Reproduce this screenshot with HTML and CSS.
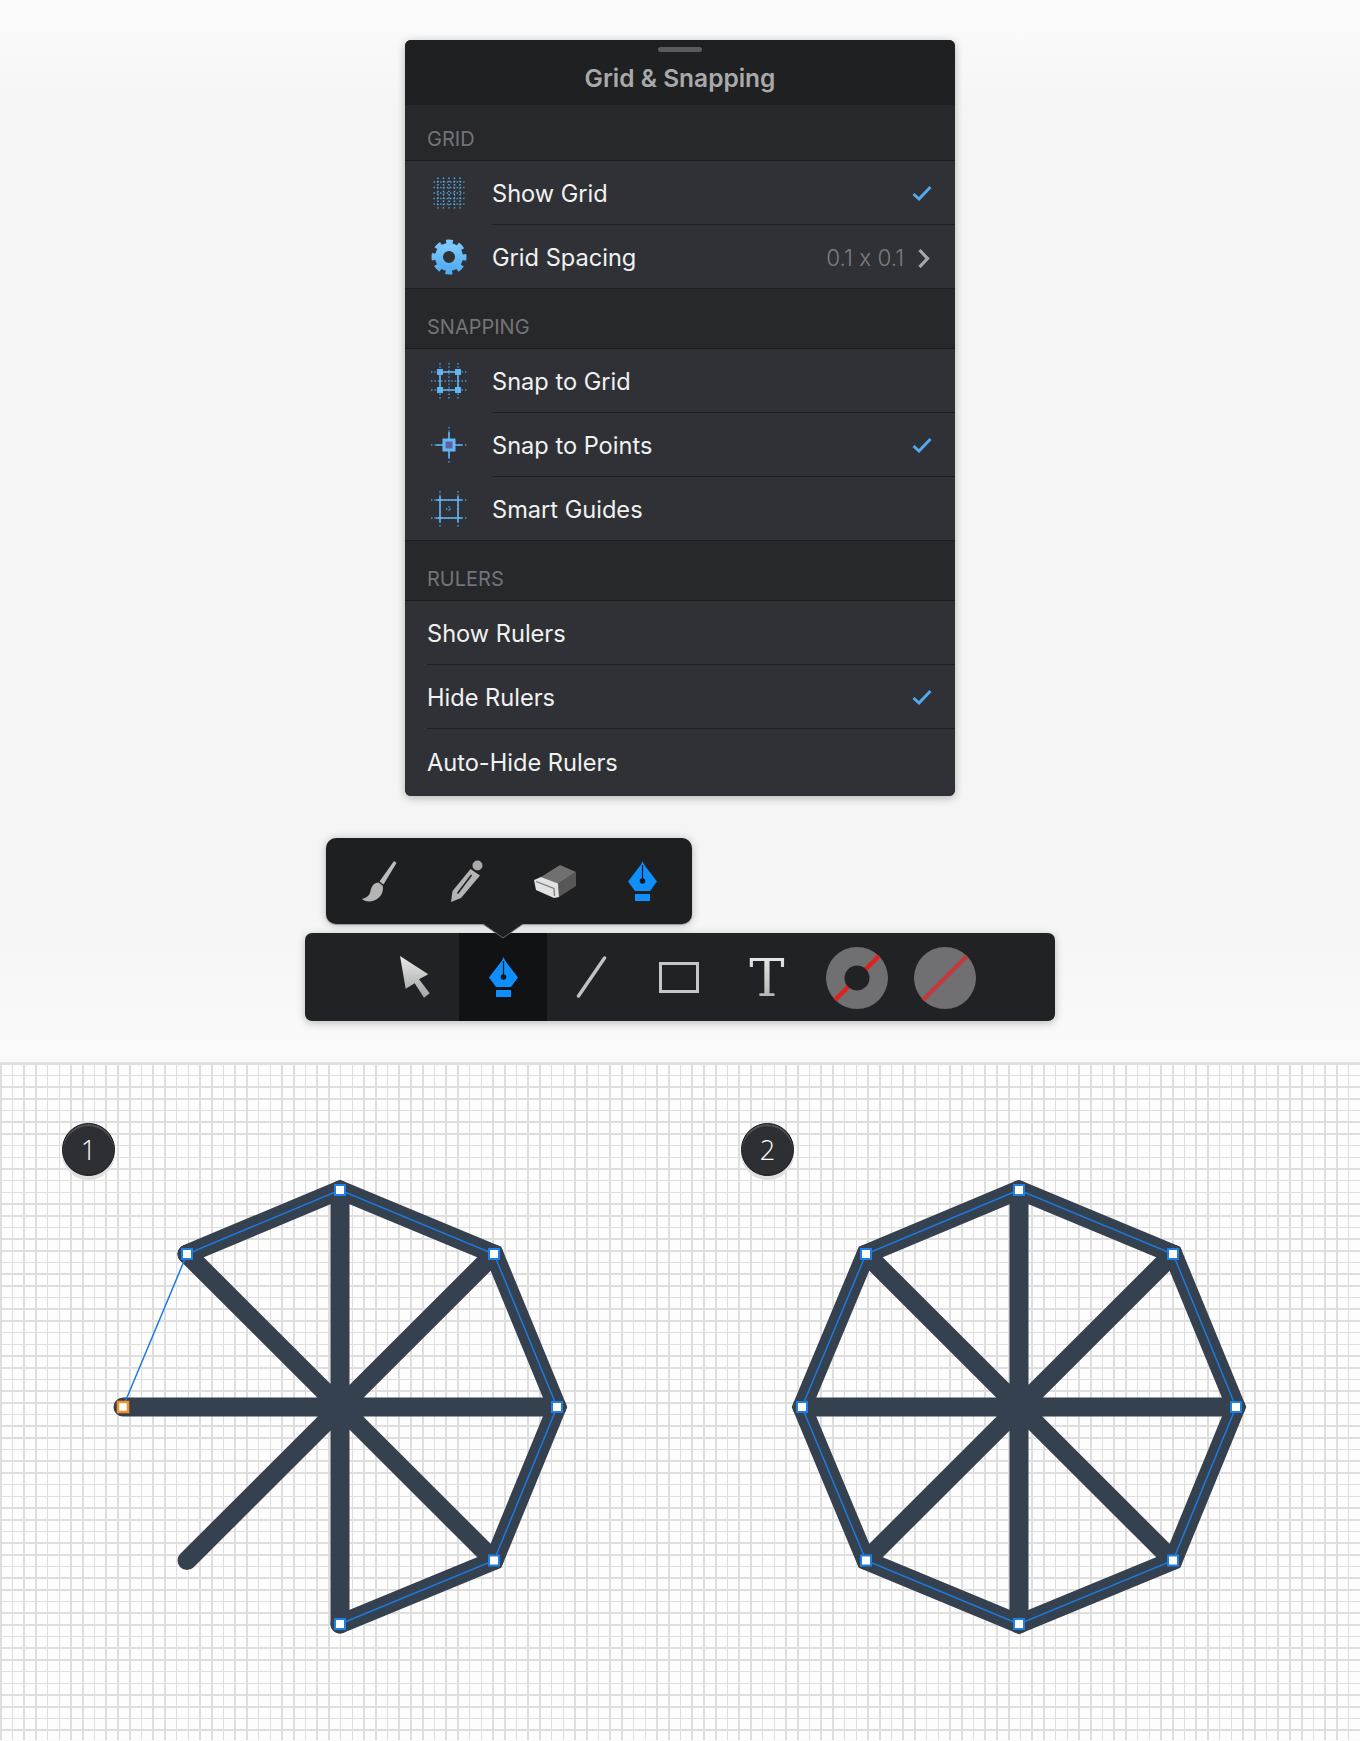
FILE: index.html
```html
<!DOCTYPE html>
<html lang="en">
<head>
<meta charset="utf-8">
<title>Grid &amp; Snapping</title>
<link rel="stylesheet" href="styles.css">
</head>
<body>
<svg class="defs" width="0" height="0" aria-hidden="true">
  <defs>
    <linearGradient id="metal" x1="0" y1="0" x2="0" y2="1"><stop offset="0" stop-color="#e8e8e8"/><stop offset="1" stop-color="#a4a4a4"/></linearGradient>
    <linearGradient id="gearFill" x1="0" y1="0" x2="0" y2="1"><stop offset="0" stop-color="#7cc8fb"/><stop offset="1" stop-color="#52aef2"/></linearGradient>
    <symbol id="pen" viewBox="0 0 29 40">
      <path d="M14.500 0L16 3.500L29 20.500L22 30H7L0 20.500L13 3.500Z" fill="#0f8ffb"/>
      <path d="M14.500 4V19" stroke="#16171a" stroke-width="1.200"/>
      <circle cx="14.500" cy="20" r="2.800" fill="#16171a"/>
      <rect x="7" y="33" width="15" height="7" fill="#0f8ffb"/>
    </symbol>
    <symbol id="check" viewBox="0 0 20 16">
      <path d="M1.500 9L7 14L18.500 2" fill="none" stroke="#52a9ee" stroke-width="3"/>
    </symbol>
    <g id="h"><rect x="-5" y="-5" width="10" height="10" fill="#fff" stroke="#1e7fe6" stroke-width="2"/></g>
  </defs>
</svg>

<section class="panel">
  <header class="panel-head">
    <span class="grabber"></span>
    <h1 class="panel-title">Grid &amp; Snapping</h1>
  </header>

  <h2 class="section section-first">GRID</h2>
  <div class="row">
    <span class="row-icon">
      <svg class="ic" viewBox="0 0 36 36"><g class="dots dots-dim"><path d="M2.500 7H33.500M2.500 12.500H33.500M2.500 18H33.500M2.500 23.500H33.500M2.500 29H33.500"/></g><g class="dots dots-b"><path d="M7 2.500V33.500M12.500 2.500V33.500M18 2.500V33.500M23.500 2.500V33.500M29 2.500V33.500"/></g></svg>
    </span>
    <div class="row-body"><span class="label">Show Grid</span><svg class="check"><use href="#check"/></svg></div>
  </div>
  <div class="row row-last">
    <span class="row-icon">
      <svg class="ic" viewBox="0 0 36 36"><circle cx="18" cy="18" r="10" fill="none" stroke="url(#gearFill)" stroke-width="8"/><circle cx="18" cy="18" r="15" fill="none" stroke="url(#gearFill)" stroke-width="5" stroke-dasharray="6.6 5.18" stroke-dashoffset="3.3"/></svg>
    </span>
    <div class="row-body row-body-last"><span class="label">Grid Spacing</span><span class="value">0.1 x 0.1</span><svg class="chev" viewBox="0 0 20 20"><path d="M7.500 2L15.500 10.500L7.500 19" fill="none" stroke="#a6a7a9" stroke-width="3.200"/></svg></div>
  </div>

  <h2 class="section">SNAPPING</h2>
  <div class="row">
    <span class="row-icon">
      <svg class="ic" viewBox="0 0 36 36"><g class="dots"><path d="M9 0V36M18 0V36M27 0V36M0 9H36M0 18H36M0 27H36"/></g><path class="solid" d="M9 9H27V27H9Z"/><g class="node"><rect x="6" y="6" width="6" height="6"/><rect x="24" y="6" width="6" height="6"/><rect x="6" y="24" width="6" height="6"/><rect x="24" y="24" width="6" height="6"/></g></svg>
    </span>
    <div class="row-body"><span class="label">Snap to Grid</span></div>
  </div>
  <div class="row">
    <span class="row-icon">
      <svg class="ic" viewBox="0 0 36 36"><g class="dots"><path d="M18 0V36M0 18H36"/></g><path class="solid" d="M18 5V31M5 18H31"/><rect x="11.500" y="11.500" width="13" height="13" fill="#64b6f5"/><rect x="14.500" y="14.500" width="7" height="7" fill="#5f62a2"/></svg>
    </span>
    <div class="row-body"><span class="label">Snap to Points</span><svg class="check"><use href="#check"/></svg></div>
  </div>
  <div class="row row-last">
    <span class="row-icon">
      <svg class="ic" viewBox="0 0 36 36"><g class="dots"><path d="M9 0V36M27 0V36M0 9H36M0 27H36M18 15V21M15 18H21"/></g><path class="solid" d="M9 5V31M27 5V31M5 9H31M5 27H31"/></svg>
    </span>
    <div class="row-body row-body-last"><span class="label">Smart Guides</span></div>
  </div>

  <h2 class="section">RULERS</h2>
  <div class="row">
    <div class="row-body row-body-plain"><span class="label">Show Rulers</span></div>
  </div>
  <div class="row">
    <div class="row-body row-body-plain"><span class="label">Hide Rulers</span><svg class="check"><use href="#check"/></svg></div>
  </div>
  <div class="row row-end">
    <div class="row-body row-body-plain row-body-last"><span class="label">Auto-Hide Rulers</span></div>
  </div>
</section>

<div class="tools">
  <div class="popover">
    <span class="cell">
      <svg class="brush" viewBox="0 0 35 41"><path d="M32 0L34.500 2L21.500 23.500L17.500 20.500Z" fill="#bdbdbd"/><path d="M16.500 21.500C12 22 9.500 25 8.500 30C7.500 35 4 37 0 38C3 41.500 12 41.500 17 36.500C20 33.500 22 28.500 20.500 24.500Z" fill="#b4b4b4"/></svg>
    </span>
    <span class="cell">
      <svg class="pencil" viewBox="0 0 32 42"><circle cx="26.500" cy="5.500" r="5" fill="#a9a9a9"/><path d="M19.500 9L29 15.500L10 38L0 42L1.500 31Z" fill="#b4b4b4"/><path d="M20.500 15L6.500 33.500" stroke="#1e1f21" stroke-width="1.600"/></svg>
    </span>
    <span class="cell">
      <svg class="eraser" viewBox="0 0 42 33"><path d="M7 12L26 0L42 7L24 19Z" fill="#707070"/><path d="M24 19L42 7V21L25 32Z" fill="#575757"/><path d="M0 15L7 12L24 18.500L25 32L20 33L2 25Z" fill="#e2e2e2"/><path d="M2 16.500L20 23.500L20.500 31" fill="none" stroke="#77787a" stroke-width="1.200"/></svg>
    </span>
    <span class="cell">
      <svg class="pen"><use href="#pen"/></svg>
    </span>
    <svg class="pointer" viewBox="0 0 42 16"><path d="M0 0H42L21 15Z" fill="#1e1f21"/><path d="M1 1L21 15L41 1" fill="none" stroke="#66676a" stroke-width="1"/></svg>
  </div>

  <div class="toolbar">
    <span class="cell cell-wide">
      <svg class="arrow" viewBox="0 0 30 42"><path d="M0 0L28.300 18.300L19 23.300L29.700 37.300L24 41.700L14.700 27.300L5.700 32.700Z" fill="url(#metal)"/></svg>
    </span>
    <span class="cell cell-wide cell-active">
      <svg class="pen"><use href="#pen"/></svg>
    </span>
    <span class="cell cell-wide">
      <svg class="line" viewBox="0 0 31 42"><path d="M2.500 40L28.500 2" stroke="#c2c2c2" stroke-width="3.400" stroke-linecap="round"/></svg>
    </span>
    <span class="cell cell-wide"><span class="rect-tool"></span></span>
    <span class="cell cell-wide"><span class="type-tool">T</span></span>
    <span class="cell cell-wide">
      <svg class="swatch" viewBox="0 0 62 62"><circle cx="31" cy="31" r="31" fill="#706f71"/><path d="M9 53L53 9" stroke="#e2201f" stroke-width="4.500"/><circle cx="31" cy="31" r="12.500" fill="#212225"/></svg>
    </span>
    <span class="cell cell-wide">
      <svg class="swatch" viewBox="0 0 62 62"><circle cx="31" cy="31" r="31" fill="#706f71"/><path d="M9 53L53 9" stroke="#c23a3a" stroke-width="4.500"/></svg>
    </span>
  </div>
</div>

<div class="canvas">
  <svg class="art" viewBox="0 1062 1360 678">
    <g class="thick">
      <path class="round" d="M187 1253L340 1189L494 1253L557 1406L494 1559.500L340 1623"/>
      <path class="round" d="M123 1406H557M340 1189V1623M187 1253L494 1559.500M494 1253L187 1559.500"/>
      <path class="miter" d="M802 1406L866 1253L1019 1189L1173 1253L1236 1406L1173 1559.500L1019 1623L866 1559.500Z"/>
      <path class="round" d="M802 1406H1236M1019 1189V1623M866 1253L1173 1559.500M1173 1253L866 1559.500"/>
    </g>
    <path class="wire" d="M123 1406L187 1253L340 1189L494 1253L557 1406L494 1559.500L340 1623"/>
    <path class="wire" d="M802 1406L866 1253L1019 1189L1173 1253L1236 1406L1173 1559.500L1019 1623L866 1559.500Z"/>
    <use href="#h" x="187" y="1253"/><use href="#h" x="340" y="1189"/><use href="#h" x="494" y="1253"/><use href="#h" x="557" y="1406"/><use href="#h" x="494" y="1559.500"/><use href="#h" x="340" y="1623"/>
    <rect x="118" y="1401" width="10" height="10" fill="#fff" stroke="#f39229" stroke-width="2.500"/>
    <use href="#h" x="802" y="1406"/><use href="#h" x="866" y="1253"/><use href="#h" x="1019" y="1189"/><use href="#h" x="1173" y="1253"/><use href="#h" x="1236" y="1406"/><use href="#h" x="1173" y="1559.500"/><use href="#h" x="1019" y="1623"/><use href="#h" x="866" y="1559.500"/>
  </svg>
  <span class="badge badge-one">1</span>
  <span class="badge badge-two">2</span>
</div>
</body>
</html>
```

FILE: styles.css
```css
* { box-sizing: border-box; }

html, body { margin: 0; padding: 0; }

body {
  width: 1360px;
  height: 1741px;
  overflow: hidden;
  display: flex;
  flex-direction: column;
  align-items: center;
  background: linear-gradient(#fbfbfb 0, #f5f5f5 120px, #f5f5f5 900px, #fafafa 1062px);
  font-family: Inter, "Liberation Sans", sans-serif;
}

.defs { position: absolute; }

/* panel */
.panel {
  width: 550px;
  margin-top: 40px;
  border-radius: 6px;
  overflow: hidden;
  background: #2f3136;
  box-shadow: 0 2px 9px rgba(0, 0, 0, .28);
}

.panel-head {
  height: 65px;
  background: #1f2022;
  display: flex;
  flex-direction: column;
  align-items: center;
  padding-top: 7px;
}

.grabber {
  width: 44px;
  height: 5px;
  border-radius: 3px;
  background: #5a5b5d;
}

.panel-title {
  margin: 11px 0 0;
  font-size: 24.500px;
  line-height: 30px;
  font-weight: 600;
  color: #a9a9a9;
}

.section {
  height: 60px;
  margin: 0;
  padding: 0 0 9px 22px;
  display: flex;
  align-items: flex-end;
  background: #27282b;
  border-bottom: 1px solid #1c1d1f;
  font-size: 20px;
  line-height: 24px;
  font-weight: 400;
  color: #737477;
}

.section-first { height: 56px; }

.row {
  height: 64px;
  display: flex;
  background: #2f3136;
}

.row-last { border-bottom: 1px solid #1f2022; }

.row-end { height: 67px; }

.row-end .row-body { padding-bottom: 2px; }

.row-icon {
  width: 87px;
  flex: none;
  display: flex;
  align-items: center;
  justify-content: center;
}

.ic { width: 36px; height: 36px; overflow: visible; }

.dots path {
  fill: none;
  stroke: #4a9cd8;
  stroke-width: 1.4;
  stroke-dasharray: 1.4 2;
}

.dots-b path {
  stroke: #5fb0e8;
  stroke-width: 1.4;
  stroke-dasharray: 1.4 1.9;
}

.dots-dim path {
  stroke: #4a9cd8;
  stroke-dasharray: 1.4 1.9;
}

.solid {
  fill: none;
  stroke: #62b4f2;
  stroke-width: 1.6;
}

.node { fill: #62b4f2; }

.row-body {
  flex: 1;
  min-width: 0;
  display: flex;
  align-items: center;
  padding-top: 2px;
  padding-right: 23px;
  border-bottom: 1px solid #1f2022;
}

.row-body-plain { margin-left: 22px; }

.row-body-last { border-bottom: 0; }

.label {
  font-size: 23.600px;
  line-height: 30px;
  color: #f1f1f1;
}

.value {
  margin-left: auto;
  margin-right: 8px;
  font-size: 22.500px;
  font-weight: 300;
  font-feature-settings: "calt" 0;
  color: #7c7d81;
}

.check {
  width: 20px;
  height: 16px;
  margin-left: auto;
  margin-bottom: 2px;
}

.chev { width: 20px; height: 20px; }

/* tools */
.tools {
  width: 750px;
  margin-top: 42px;
  display: flex;
  flex-direction: column;
}

.popover {
  position: relative;
  z-index: 2;
  width: 366px;
  height: 86px;
  margin-left: 21px;
  padding-left: 10px;
  display: flex;
  align-items: center;
  border-radius: 10px;
  background: #1e1f21;
  box-shadow: 0 1px 1px #9a9a9a, 0 1px 8px rgba(0, 0, 0, .25);
}

.pointer {
  position: absolute;
  left: 156px;
  top: 85px;
  width: 42px;
  height: 16px;
}

.cell {
  width: 87.5px;
  flex: none;
  height: 100%;
  display: flex;
  align-items: center;
  justify-content: center;
}

.cell-wide { width: 88px; }

.cell-active { background: #111214; }

.brush { width: 35px; height: 41px; }
.pencil { width: 32px; height: 42px; }
.eraser { width: 42px; height: 33px; }
.pen { width: 29px; height: 40px; }
.arrow { width: 30px; height: 42px; }
.line { width: 31px; height: 42px; }

.swatch {
  width: 62px;
  height: 62px;
  margin: 2px 0 0 4px;
}

.rect-tool {
  width: 40px;
  height: 31px;
  border: 3px solid #c6c6c6;
}

.type-tool {
  font-family: "DejaVu Serif", serif;
  font-size: 53px;
  line-height: 59px;
  background: linear-gradient(#f2f2f2, #a9a9a9);
  -webkit-background-clip: text;
  background-clip: text;
  color: transparent;
}

.toolbar {
  height: 88px;
  margin-top: 9px;
  padding-left: 66px;
  display: flex;
  border-radius: 7px;
  background: #212225;
  box-shadow: 0 2px 9px rgba(0, 0, 0, .25);
}

/* canvas */
.canvas {
  position: relative;
  width: 1360px;
  height: 678px;
  margin-top: 41px;
  background-color: #fdfdfd;
  background-image:
    repeating-linear-gradient(180deg, #dedede 0, #dedede 1.600px, transparent 1.600px, transparent 11.690px),
    repeating-linear-gradient(90deg, #dedede 0, #dedede 1.600px, transparent 1.600px, transparent 11.720px);
  border-top: 1px solid #e2e2e2;
}

.art { display: block; width: 1360px; height: 678px; }

.thick path {
  fill: none;
  stroke: #36414f;
  stroke-width: 19;
}

.thick .round { stroke-linecap: round; stroke-linejoin: miter; }
.thick .miter { stroke-linejoin: miter; }

.wire {
  fill: none;
  stroke: #1c7be0;
  stroke-width: 1.500;
}

.badge {
  position: absolute;
  top: 60px;
  width: 53px;
  height: 53px;
  display: flex;
  align-items: center;
  justify-content: center;
  border-radius: 50%;
  background: #2e2f35;
  border: 1px solid #17181b;
  box-shadow: inset 0 2px 1px #55565b, 0 4px 0 #e0e0e0;
  font-family: "Open Sans", sans-serif;
  font-size: 27px;
  font-weight: 300;
  color: #fff;
}

.badge-one { left: 62px; }
.badge-two { left: 741px; }
```
